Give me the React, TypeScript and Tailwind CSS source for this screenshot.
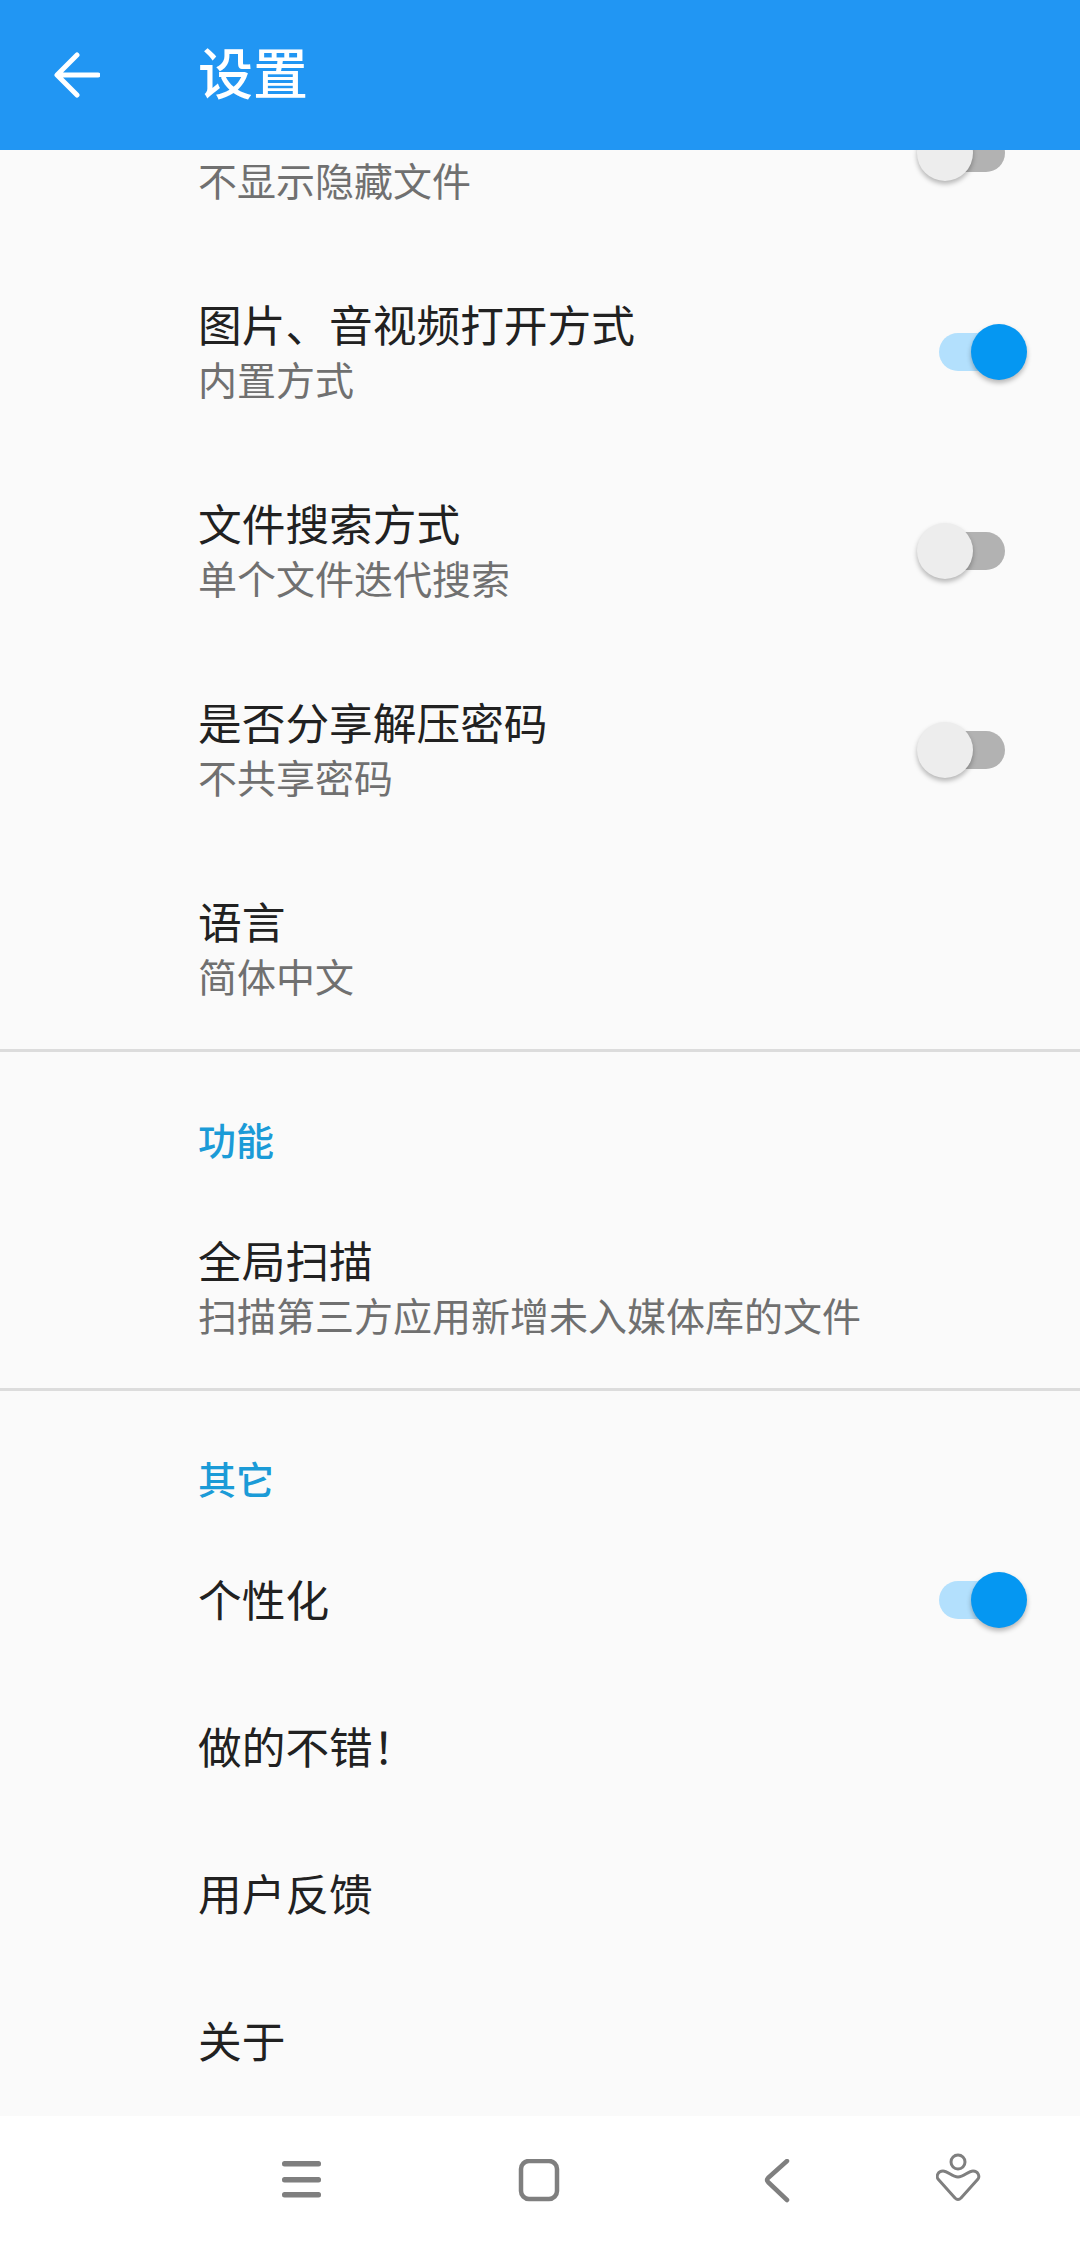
import React from 'react';

const cjk = "font-['Roboto','Noto_Sans_CJK_SC',sans-serif]";

const Toggle: React.FC<{ on?: boolean }> = ({ on }) => (
  <div className="relative h-[56px] w-[110px] shrink-0 mb-[5px]">
    {on ? (
      <>
        <div className="absolute left-[22px] top-[9px] h-[38px] w-[76px] rounded-full bg-[#b3e0fd]" />
        <div className="absolute right-0 top-0 h-[56px] w-[56px] rounded-full bg-[#0597f2] shadow-[0_3px_5px_rgba(0,0,0,0.28)]" />
      </>
    ) : (
      <>
        <div className="absolute left-[13px] top-[9px] h-[38px] w-[75px] rounded-full bg-[#b2b2b2]" />
        <div className="absolute left-0 top-0 h-[56px] w-[56px] rounded-full bg-[#ededed] shadow-[0_3px_5px_rgba(0,0,0,0.28)]" />
      </>
    )}
  </div>
);

interface RowProps {
  title?: string;
  sub?: string;
  toggle?: 'on' | 'off';
}

const Row: React.FC<RowProps> = ({ title, sub, toggle }) => (
  <div className={`flex items-center justify-between pl-[198px] pr-[53px] ${sub ? 'h-[199px]' : 'h-[147px]'}`}>
    <div>
      <div className="h-[55px] text-[43.7px] leading-[55px] text-[#212121]">{title}</div>
      {sub && <div className="text-[39px] leading-[55px] text-[#707070]">{sub}</div>}
    </div>
    {toggle && <Toggle on={toggle === 'on'} />}
  </div>
);

const SectionLabel: React.FC<{ text: string; className: string }> = ({ text, className }) => (
  <div className={`pl-[198px] text-[38px] leading-[50px] font-medium text-[#1b9bd7] ${className}`}>{text}</div>
);

const App: React.FC = () => {
  return (
    <div className={`flex h-[2246px] w-[1080px] flex-col overflow-hidden bg-[#fafafa] ${cjk}`}>
      <header className="relative z-10 flex h-[150px] shrink-0 items-center bg-[#2196f3]">
        <svg className="ml-[54px] h-[46px] w-[46px]" viewBox="0 0 46 46" fill="none" stroke="#fff" strokeWidth="5" strokeLinecap="round" strokeLinejoin="round">
          <path d="M44 23H4M23 3 3 23l20 20" />
        </svg>
        <div className="ml-[98px] text-[55px] font-medium leading-none text-white">设置</div>
      </header>

      <main className="min-h-0 flex-1 overflow-hidden">
        <div className="-mt-[94px]">
          <Row sub="不显示隐藏文件" toggle="off" />
          <Row title="图片、音视频打开方式" sub="内置方式" toggle="on" />
          <Row title="文件搜索方式" sub="单个文件迭代搜索" toggle="off" />
          <Row title="是否分享解压密码" sub="不共享密码" toggle="off" />
          <Row title="语言" sub="简体中文" />
          <div className="-mt-[2px] h-[3px] bg-[#dcdcdc]" />
          <SectionLabel text="功能" className="pt-[65px] pb-[24px]" />
          <Row title="全局扫描" sub="扫描第三方应用新增未入媒体库的文件" />
          <div className="-mt-[2px] h-[3px] bg-[#dcdcdc]" />
          <SectionLabel text="其它" className="pt-[65px] pb-[23px]" />
          <Row title="个性化" toggle="on" />
          <Row title="做的不错！" />
          <Row title="用户反馈" />
          <Row title="关于" />
        </div>
      </main>

      <nav className="flex h-[130px] shrink-0 items-center bg-white pl-[280px] text-[#7f7f7f]">
        <svg className="h-[48px] w-[44px]" viewBox="0 0 44 48" fill="currentColor">
          <rect x="2" y="4" width="39" height="5.5" rx="2.5" />
          <rect x="2" y="20" width="39" height="5.5" rx="2.5" />
          <rect x="2" y="35" width="39" height="5.5" rx="2.5" />
        </svg>
        <svg className="ml-[193px] h-[44px] w-[44px]" viewBox="0 0 44 44" fill="none" stroke="currentColor" strokeWidth="4.5">
          <rect x="4" y="2" width="36" height="38" rx="8" />
        </svg>
        <svg className="ml-[199px] h-[44px] w-[30px]" viewBox="0 0 30 44" fill="none" stroke="currentColor" strokeWidth="4.5" strokeLinecap="round" strokeLinejoin="round">
          <path d="M27 2 8 19q-2 2 0 4l19 18" />
        </svg>
        <svg className="mb-[8px] ml-[146px] h-[48px] w-[46px]" viewBox="0 0 46 48" fill="none" stroke="currentColor" strokeWidth="3" strokeLinejoin="round">
          <circle cx="22" cy="9" r="7" />
          <path d="M7 18C12 18 16 24 22 24S32 18 37 18C42 18 44 23 42 26L25 45C23 47 21 47 19 45L2 26C0 23 2 18 7 18Z" />
        </svg>
      </nav>
    </div>
  );
};

export default App;
